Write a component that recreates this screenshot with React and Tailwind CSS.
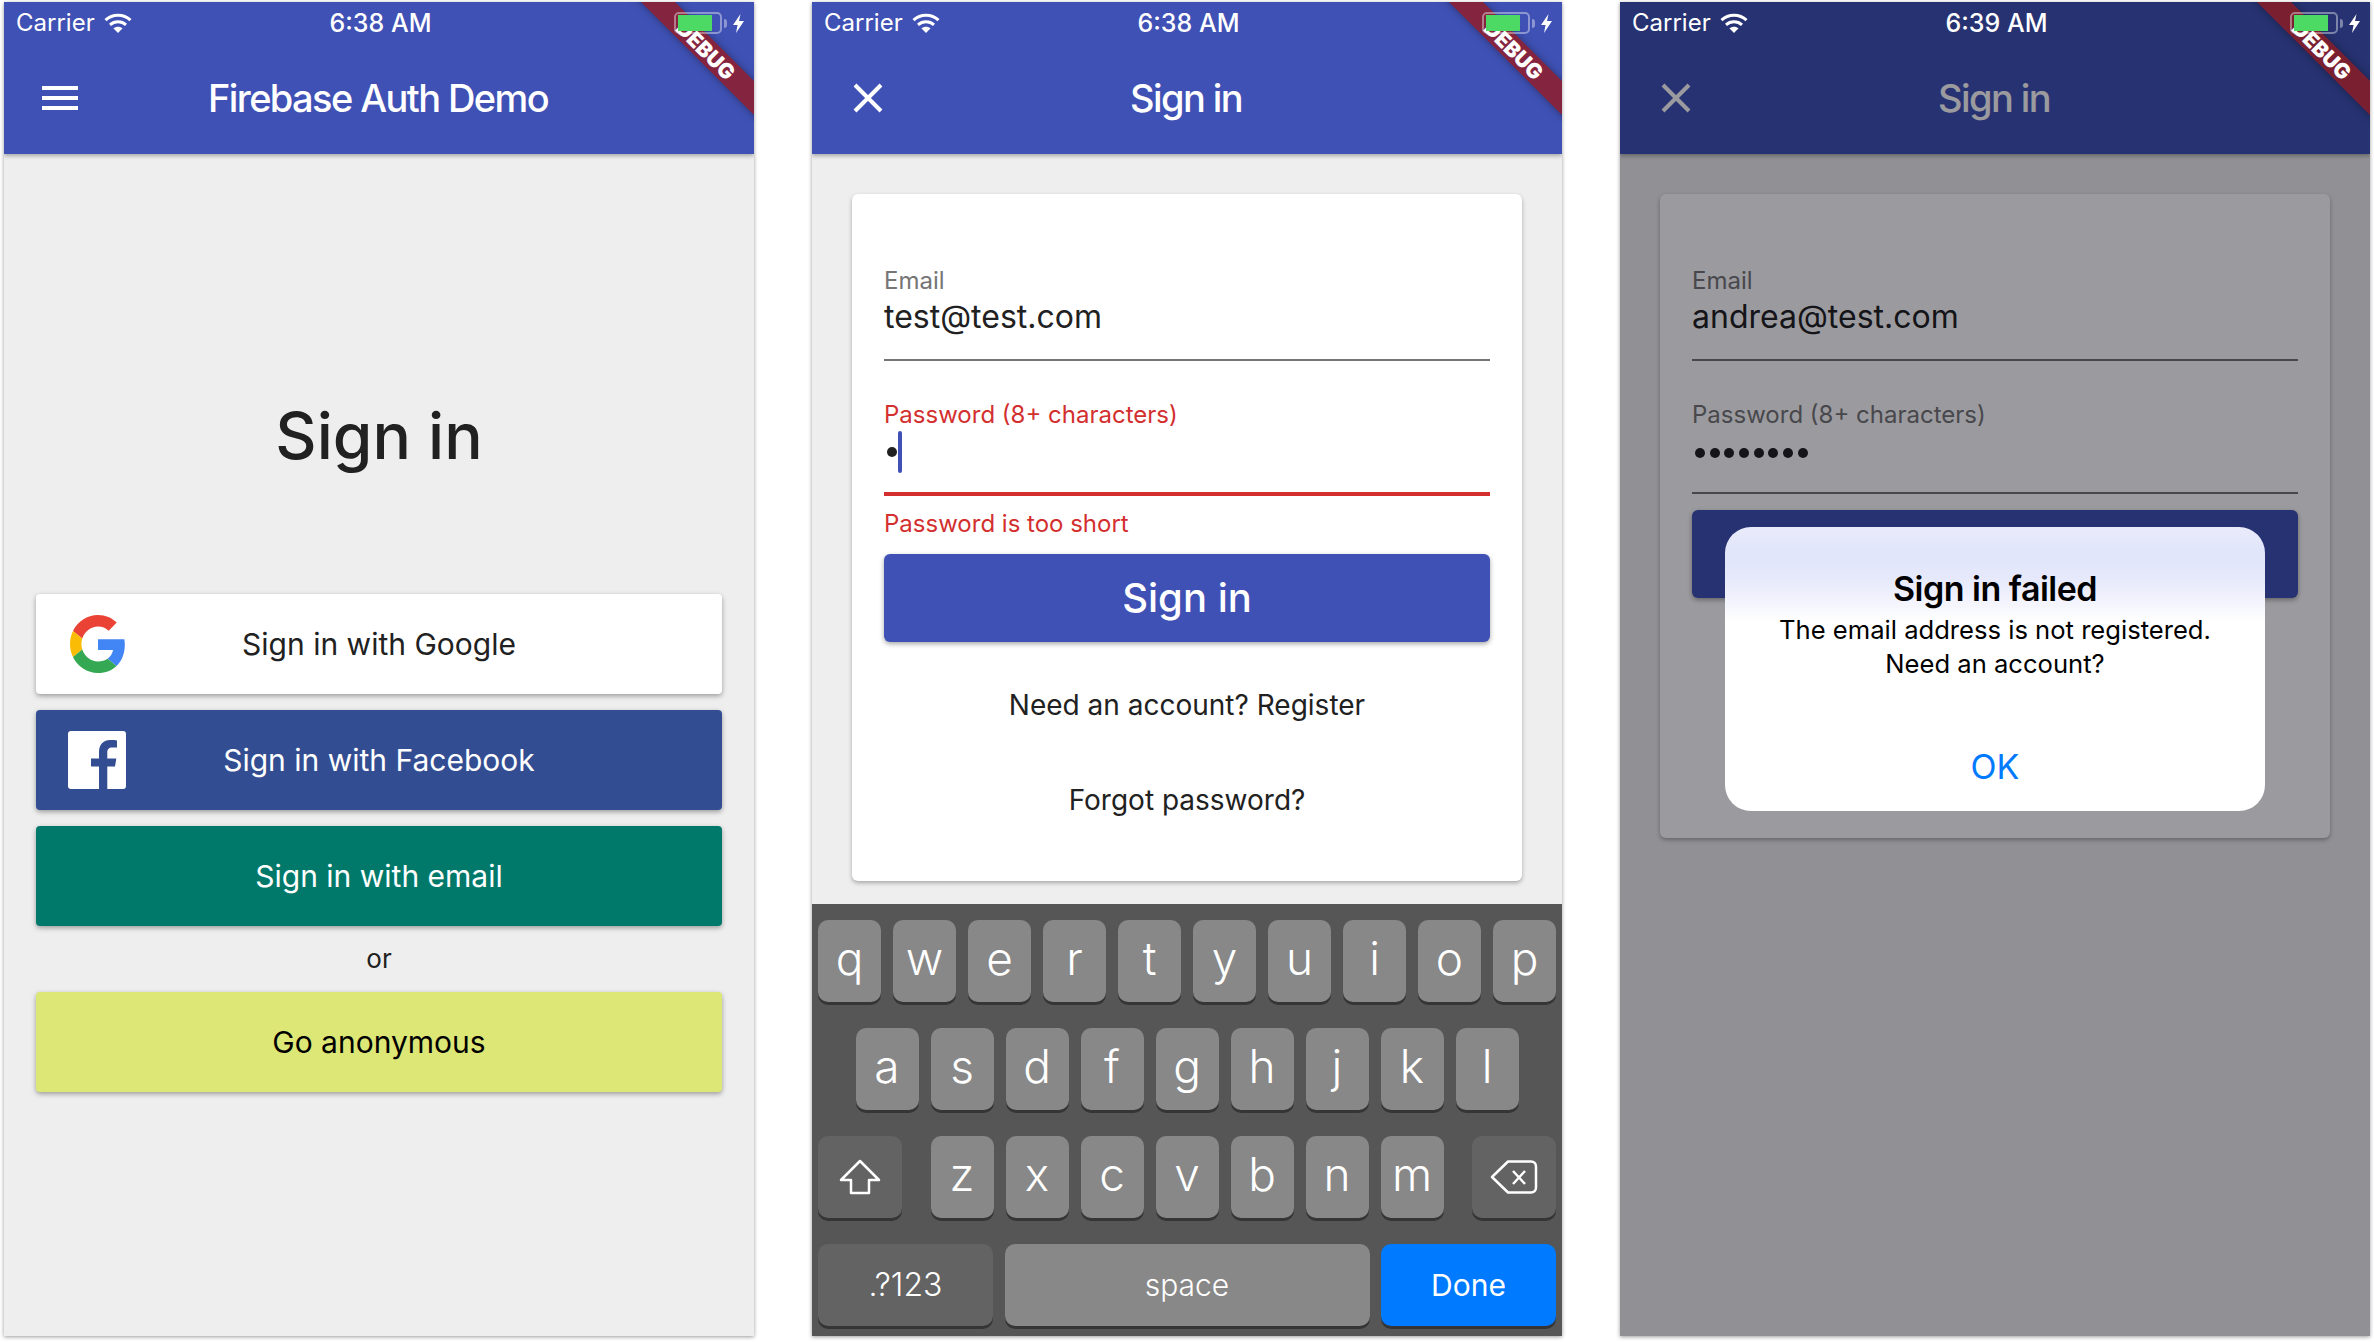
import React from "react";

function Wifi() {
  return (
    <svg width="28" height="20" viewBox="0 0 28 20" fill="none">
      <path d="M1.5 7.2C8.5 .6 19.5 .6 26.5 7.2" stroke="#fff" strokeWidth="3" />
      <path d="M6 11.8C10.5 7.8 17.5 7.8 22 11.8" stroke="#fff" strokeWidth="3" />
      <path d="M14 20L9.4 15.3C12 13.2 16 13.2 18.6 15.3Z" fill="#fff" />
    </svg>
  );
}

function Bolt() {
  return (
    <svg width="11" height="19" viewBox="0 0 11 19">
      <path d="M7.5 0L0 11H4.6L3 19L11 7H6Z" fill="#fff" />
    </svg>
  );
}

function StatusBar({ time }) {
  return (
    <div className="relative z-30 grid h-[42px] grid-cols-3 items-center pl-[12px] pr-[10px] text-white">
      <div className="flex items-center gap-[9px]">
        <span className="text-[24px] leading-none">Carrier</span>
        <Wifi />
      </div>
      <span className="pl-[1px] text-center text-[25px] leading-none font-medium">{time}</span>
      <div className="flex items-center justify-end">
        <div className="flex h-[22px] w-[48px] items-center rounded-[5px] border-2 border-white/40 pl-[2px]">
          <div className="h-[16px] w-[34px] bg-[#4cd964]" />
        </div>
        <div className="ml-[2px] mr-[6px] h-[9px] w-[3px] rounded-r-full bg-white/40" />
        <Bolt />
      </div>
    </div>
  );
}

function Banner({ dim }) {
  return (
    <div className="pointer-events-none absolute right-0 top-0 z-20 h-[120px] w-[150px] overflow-hidden">
      <div
        className={
          "absolute left-[2px] top-[36px] flex h-[24px] w-[200px] rotate-45 items-center justify-center text-[21px] leading-none font-black text-white shadow-[0_0_8px_rgba(0,0,0,0.35)] " +
          (dim ? "bg-[#7a1f30]" : "bg-[#85243f]")
        }
      >
        DEBUG
      </div>
    </div>
  );
}

function Hamburger() {
  return (
    <div className="flex h-[24px] w-[36px] flex-col justify-between">
      <div className="h-[4px] bg-white" />
      <div className="h-[4px] bg-white" />
      <div className="h-[4px] bg-white" />
    </div>
  );
}

function CloseIcon() {
  return (
    <svg width="30" height="30" viewBox="0 0 30 30" className="ml-[3px]">
      <path d="M2 2L28 28M28 2L2 28" stroke="#fff" strokeWidth="4" />
    </svg>
  );
}

function AppBar({ time, title, icon }) {
  return (
    <div className="relative h-[152px] shrink-0 bg-[#3f51b5] shadow-[0_2px_4px_rgba(0,0,0,0.3)]">
      <StatusBar time={time} />
      <div className="grid h-[108px] grid-cols-[1fr_auto_1fr] items-center px-[38px]">
        <div className="flex items-center">{icon}</div>
        <div className="pr-[2px] text-[38px] leading-none font-medium tracking-[-1.6px] text-white">{title}</div>
        <div />
      </div>
    </div>
  );
}

function GoogleLogo() {
  return (
    <svg width="56" height="58" viewBox="0 0 48 48" preserveAspectRatio="none" className="ml-[2px]">
      <path fill="#EA4335" d="M24 9.5c3.54 0 6.71 1.22 9.21 3.6l6.85-6.85C35.9 2.38 30.47 0 24 0 14.62 0 6.51 5.38 2.56 13.22l7.98 6.19C12.43 13.72 17.74 9.5 24 9.5z" />
      <path fill="#4285F4" d="M46.98 24.55c0-1.57-.15-3.09-.38-4.55H24v9.02h12.94c-.58 2.96-2.26 5.48-4.78 7.18l7.73 6c4.51-4.18 7.09-10.36 7.09-17.65z" />
      <path fill="#FBBC05" d="M10.53 28.59c-.48-1.45-.76-2.99-.76-4.59s.27-3.14.76-4.59l-7.98-6.19C.92 16.46 0 20.12 0 24c0 3.88.92 7.54 2.56 10.78l7.97-6.19z" />
      <path fill="#34A853" d="M24 48c6.48 0 11.93-2.13 15.89-5.81l-7.73-6c-2.15 1.45-4.92 2.3-8.16 2.3-6.26 0-11.57-4.22-13.47-9.91l-7.98 6.19C6.51 42.62 14.62 48 24 48z" />
    </svg>
  );
}

function FacebookLogo() {
  return (
    <svg width="58" height="58" viewBox="0 0 58 58">
      <rect width="58" height="58" rx="3" fill="#fff" />
      <path
        fill="#334d92"
        d="M31 58V35.5H23V27.5H31V21C31 13 36 9 42 9C45 9 47.5 9.2 49 9.4V16.5H44.5C40.5 16.5 39.3 18.5 39.3 21.5V27.5H48.3L47 35.5H39.3V58Z"
      />
    </svg>
  );
}

function SocialButton({ className, icon, children }) {
  return (
    <div
      className={
        "grid h-[100px] grid-cols-[1fr_auto_1fr] items-center rounded-[4px] px-[32px] text-[30px] leading-none font-normal shadow-[0_2px_5px_rgba(0,0,0,0.35)] " +
        className
      }
    >
      <div className="flex items-center">{icon}</div>
      <span>{children}</span>
      <div />
    </div>
  );
}

function SignInScreen() {
  return (
    <div className="flex flex-1 flex-col bg-[#eeeeee] px-[32px]">
      <div className="flex h-[440px] items-center justify-center pt-[124px] text-[64px] leading-none font-medium text-[#212121]">
        Sign in
      </div>
      <div className="flex flex-col gap-[16px]">
        <SocialButton className="bg-white text-[#212121]" icon={<GoogleLogo />}>
          Sign in with Google
        </SocialButton>
        <SocialButton className="bg-[#334d92] text-white" icon={<FacebookLogo />}>
          Sign in with Facebook
        </SocialButton>
        <SocialButton className="bg-[#00796b] text-white">Sign in with email</SocialButton>
      </div>
      <div className="flex h-[66px] items-center justify-center text-[26px] leading-none text-[#212121]">or</div>
      <SocialButton className="bg-[#dce775] text-black">Go anonymous</SocialButton>
    </div>
  );
}

function Form({ email, password, error, labelClass, lineClass, heightClass, buttonGapClass, actions }) {
  return (
    <div className={"flex flex-col rounded-[6px] bg-white px-[32px] pt-[71px] shadow-[0_2px_4px_rgba(0,0,0,0.3)] " + heightClass}>
      <div className="flex h-[32px] items-center text-[24px] leading-none text-[#757575]">Email</div>
      <div className="flex h-[40px] items-center text-[32px] leading-none text-[#212121]">{email}</div>
      <div className="mt-[22px] h-[2px] bg-[#757575]" />
      <div className={"mt-[38px] flex h-[32px] items-center text-[24px] leading-none " + labelClass}>
        Password (8+ characters)
      </div>
      <div className="flex h-[42px] items-center">{password}</div>
      <div className={"mt-[19px] " + lineClass} />
      {error && (
        <div className="mt-[12px] flex h-[32px] items-center text-[24px] leading-none text-[#d32f2f]">
          Password is too short
        </div>
      )}
      <div className={"flex h-[88px] shrink-0 items-center justify-center rounded-[6px] bg-[#3f51b5] text-[40px] leading-none font-medium text-white shadow-[0_2px_5px_rgba(0,0,0,0.35)] " + buttonGapClass}>
        {actions && "Sign in"}
      </div>
      {actions && (
        <>
          <div className="flex h-[96px] shrink-0 items-center justify-center pt-[30px] text-[28px] leading-none text-[#212121]">
            Need an account? Register
          </div>
          <div className="flex h-[96px] shrink-0 items-center justify-center pt-[28px] text-[28px] leading-none text-[#212121]">
            Forgot password?
          </div>
        </>
      )}
    </div>
  );
}

function Key({ children, className }) {
  return (
    <div
      className={
        "flex h-[82px] items-center justify-center rounded-[10px] text-white shadow-[0_3px_0_#353535] " + className
      }
    >
      {children}
    </div>
  );
}

function Letters({ keys }) {
  return (
    <div className="flex justify-center gap-[12px]">
      {keys.split("").map((k) => (
        <Key key={k} className="w-[63px] bg-[#888888] pb-[6px] text-[46px] leading-none font-light">
          {k}
        </Key>
      ))}
    </div>
  );
}

function Keyboard() {
  return (
    <div className="flex h-[432px] shrink-0 flex-col gap-[26px] bg-[#565656] px-[6px] pt-[16px]">
      <Letters keys="qwertyuiop" />
      <Letters keys="asdfghjkl" />
      <div className="flex items-center justify-between">
        <Key className="w-[84px] bg-[#636363]">
          <svg width="42" height="36" viewBox="0 0 42 36" fill="none">
            <path d="M21 2L40 21H30V34H12V21H2Z" stroke="#fff" strokeWidth="2.5" strokeLinejoin="round" />
          </svg>
        </Key>
        <Letters keys="zxcvbnm" />
        <Key className="w-[84px] bg-[#636363]">
          <svg width="48" height="36" viewBox="0 0 48 36" fill="none">
            <path
              d="M2 18L18 2.5H41C44 2.5 46 4.5 46 7.5V28.5C46 31.5 44 33.5 41 33.5H18Z"
              stroke="#fff"
              strokeWidth="2.5"
              strokeLinejoin="round"
            />
            <path d="M23 12L35 25M35 12L23 25" stroke="#fff" strokeWidth="2.5" />
          </svg>
        </Key>
      </div>
      <div className="flex gap-[11.5px]">
        <Key className="w-[175px] bg-[#636363] text-[32px] leading-none font-light">.?123</Key>
        <Key className="flex-1 bg-[#888888] text-[30px] leading-none font-light">space</Key>
        <Key className="w-[175px] bg-[#007aff] text-[30px] leading-none font-normal">Done</Key>
      </div>
    </div>
  );
}

function Dialog() {
  return (
    <div className="absolute left-[105px] top-[525px] flex h-[284px] w-[540px] flex-col items-center rounded-[26px] bg-[linear-gradient(to_bottom,#e9ebfb_0%,#e1e5fa_10%,#e6e9fb_18%,#f4f5fd_27%,#ffffff_33%)] pt-[40px] text-black">
      <div className="flex h-[44px] items-center text-[34px] leading-none font-semibold tracking-[-0.5px]">
        Sign in failed
      </div>
      <div className="mt-[2px] text-center text-[25.6px] leading-[34px]">
        <div>The email address is not registered.</div>
        <div>Need an account?</div>
      </div>
      <div className="mt-[56px] flex h-[60px] items-center text-[34px] leading-none text-[#007aff]">OK</div>
    </div>
  );
}

function Phone({ children, time, title, icon, dim }) {
  return (
    <div className="relative flex h-[1334px] w-[750px] shrink-0 flex-col overflow-hidden bg-[#eeeeee] shadow-[0_1px_4px_rgba(0,0,0,0.4)]">
      <AppBar time={time} title={title} icon={icon} />
      {children}
      <Banner dim={dim} />
    </div>
  );
}

export default function App() {
  return (
    <div className="flex h-[1342px] w-[2374px] gap-[58px] overflow-hidden bg-white pl-[4px] pt-[2px] font-[Inter,sans-serif]">
      <Phone time="6:38 AM" title="Firebase Auth Demo" icon={<Hamburger />}>
        <SignInScreen />
      </Phone>
      <Phone time="6:38 AM" title="Sign in" icon={<CloseIcon />}>
        <div className="flex flex-1 flex-col bg-[#eeeeee]">
          <div className="h-[750px] px-[40px] pt-[40px]">
            <Form
              email="test@test.com"
              error
              actions
              heightClass="h-[687px]"
              buttonGapClass="mt-[14px]"
              labelClass="text-[#d32f2f]"
              lineClass="h-[4px] bg-[#d32f2f]"
              password={
                <div className="flex items-center">
                  <span className="ml-[3px] h-[10px] w-[10px] rounded-full bg-[#212121]" />
                  <span className="ml-[1px] h-[42px] w-[4px] rounded-full bg-[#3f51b5]" />
                </div>
              }
            />
          </div>
          <Keyboard />
        </div>
      </Phone>
      <Phone time="6:39 AM" title="Sign in" icon={<CloseIcon />} dim>
        <div className="flex-1 bg-[#eeeeee] px-[40px] pt-[40px]">
          <Form
            email="andrea@test.com"
            heightClass="h-[644px]"
            buttonGapClass="mt-[16px]"
            labelClass="text-[#757575]"
            lineClass="h-[2px] bg-[#757575]"
            password={
              <div className="ml-[3px] mt-[2px] flex gap-[4.7px]">
                {[0, 1, 2, 3, 4, 5, 6, 7].map((i) => (
                  <span key={i} className="h-[10px] w-[10px] rounded-full bg-[#212121]" />
                ))}
              </div>
            }
          />
        </div>
        <div className="absolute inset-0 bg-[#04040f66]" />
        <Dialog />
      </Phone>
    </div>
  );
}
